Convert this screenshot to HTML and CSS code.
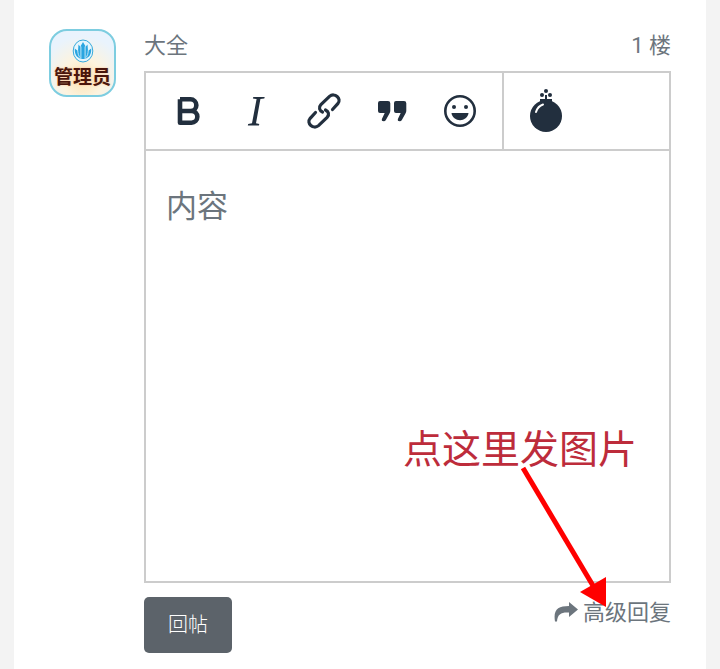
FILE: index.html
```
<!DOCTYPE html>
<html lang="zh-CN">
	<head>
		<meta charset="UTF-8">
		<meta name="viewport" content="width=device-width, initial-scale=1.0">
		<title>回帖</title>
		<link rel="stylesheet" href="styles.css">
	</head>
	<body>
		<div class="card">
			<div class="avatar">
				<svg class="avatar-logo" viewBox="0 0 22 24">
					<ellipse cx="11" cy="12" rx="9.800" ry="11" fill="#e6f6fd" stroke="#35a9dc" stroke-width="1"/>
					<path d="M11 3l2.300 4v13H8.700V7z" fill="#2aa5e0"/>
					<path d="M6.500 5.500L9 8.500v11.200C4.500 18.500 2.500 15 2.800 9.500L6 12zM15.500 5.500L13 8.500v11.200c4.500-1.200 6.500-4.700 6.200-10.200L16 12z" fill="#2aa5e0"/>
					<path d="M8.900 7.500V20M13.100 7.500V20M5.800 11.500c0 3 .8 5.500 2.200 7M16.200 11.500c0 3-.8 5.500-2.200 7" fill="none" stroke="#e6f6fd" stroke-width=".8"/>
				</svg>
				<span class="avatar-name">管理员</span>
			</div>
			<form class="reply">
				<div class="reply-head">
					<span>大全</span>
					<span>1 楼</span>
				</div>
				<div class="editor">
					<div class="toolbar">
						<div class="tool-group">
							<button type="button" class="tool" aria-label="粗体">
								<svg viewBox="0 0 40 40"><path d="M12 8.300v23.400h11.500a5.500 5.500 0 0 0 0-11.700H12M12 8.300h10.500a5.800 5.800 0 0 1 0 11.700" fill="none" stroke="#222f3e" stroke-width="4.600" stroke-linejoin="round"/></svg>
							</button>
							<button type="button" class="tool" aria-label="斜体">
								<svg viewBox="0 0 40 40"><path d="M17.300 6h11.400l-.4 1.500-3.900.6L20 32.300l3.300.6-.4 1.500H11.800l.4-1.500 3.800-.6L20.600 8.100l-3.700-.6z" fill="#222f3e"/></svg>
							</button>
							<button type="button" class="tool" aria-label="链接">
								<svg viewBox="0 0 40 40"><g fill="none" stroke="#222f3e" stroke-width="3.200" stroke-linecap="round"><path d="M18.500 21c-3-1.500-4.200-4.500-1.600-7.300l8.600-8.300c5-4.300 12.600 2 8.300 7.300L28.500 18.500"/><path d="M21.500 19c3 1.500 4.200 4.500 1.600 7.300l-8.600 8.300C9.500 38.900 1.900 32.600 6.200 27.300L11.500 21.500"/></g></svg>
							</button>
							<button type="button" class="tool" aria-label="引用">
								<svg viewBox="0 0 40 40"><path d="M8 10h8q2.300 0 2.300 2.300v7.400q0 1.300-.7 2.600L14 28.800q-.8 1.500-2.300 1.500-2.600 0-1.700-2.500l2.700-5.800H8q-2 0-2-2v-8q0-2 2-2zM24 10h8q2.300 0 2.300 2.300v7.400q0 1.300-.7 2.600L30 28.800q-.8 1.500-2.300 1.500-2.600 0-1.700-2.500l2.700-5.800H24q-2 0-2-2v-8q0-2 2-2z" fill="#222f3e"/></svg>
							</button>
							<button type="button" class="tool" aria-label="表情">
								<svg viewBox="0 0 40 40"><circle cx="20" cy="20" r="14.700" fill="none" stroke="#222f3e" stroke-width="2.600"/><circle cx="14" cy="16" r="2" fill="#222f3e"/><circle cx="26" cy="16" r="2" fill="#222f3e"/><path d="M11.500 22h17c-1 9.500-16 9.500-17 0z" fill="#222f3e"/></svg>
							</button>
						</div>
						<div class="tool-group">
							<button type="button" class="tool" aria-label="炸弹">
								<svg class="bomb" viewBox="0 0 40 48"><g fill="#222f3e"><circle cx="20" cy="29" r="16"/><path d="M14 12h12v6H14zM19 8h2v5h-2z"/><circle cx="20" cy="4" r="2"/><circle cx="16" cy="8" r="2"/><circle cx="24" cy="8" r="2"/></g><path d="M10 25q2-6 7-7.500" fill="none" stroke="#fff" stroke-width="2" stroke-linecap="round"/></svg>
							</button>
						</div>
					</div>
					<textarea class="content" placeholder="内容" aria-label="内容"></textarea>
					<div class="tip">点这里发图片
						<svg class="tip-arrow" viewBox="0 0 88 144"><path d="M3 3l72 121" stroke="#f00" stroke-width="5"/><path d="M86 142L60 127l26-15z" fill="#f00"/></svg>
					</div>
				</div>
				<div class="reply-foot">
					<button type="submit" class="submit">回帖</button>
					<a href="#" class="advanced">
						<svg viewBox="0 0 24 22"><path d="M1 19.500C-1 7.500 4 4 15 4V0l9 7.500-9 7.500v-4.500C8 10 3.500 11.500 3 19.500z" fill="#6c757d"/></svg>
						高级回复
					</a>
				</div>
			</form>
		</div>
	</body>
</html>
```
FILE: styles.css
```
*{
	box-sizing: border-box;
}
body{
	margin: 0;
	background: #f3f3f3;
	color: #6c757d;
	font: 22px/34px Roboto, "Noto Sans CJK SC", sans-serif;
}
.card{
	display: flex;
	align-items: flex-start;
	gap: 28px;
	min-height: 100vh;
	margin: 0 14px;
	padding: 29px 35px 16px;
	background: #fff;
}
.avatar{
	display: flex;
	flex-direction: column;
	align-items: center;
	flex: none;
	width: 67px;
	height: 68px;
	padding-top: 8px;
	border: 2px solid #7dcde0;
	border-radius: 18px;
	background: radial-gradient(circle at 50% 75%, #fbe3b5, #fdf3de 35%, #e9f3fd 75%);
}
.avatar-logo{
	width: 22px;
	height: 24px;
	flex: none;
}
.avatar-name{
	color: #4a160c;
	font: bold 19px/26px "Noto Sans CJK SC", sans-serif;
	text-shadow: 0 0 2px #f7b98c;
}
.reply{
	flex: 1;
	min-width: 0;
}
.reply-head{
	display: flex;
	justify-content: space-between;
	margin-bottom: 8px;
}
.editor{
	position: relative;
	border: 2px solid #ccc;
}
.toolbar{
	display: flex;
	border-bottom: 2px solid #ccc;
}
.tool-group{
	display: flex;
	padding: 0 8px;
}
.tool-group + .tool-group{
	border-left: 2px solid #ccc;
}
.tool{
	display: flex;
	align-items: center;
	justify-content: center;
	width: 68px;
	height: 76px;
	padding: 0;
	border: 0;
	background: none;
}
.tool svg{
	width: 40px;
	height: 40px;
}
.tool .bomb{
	height: 48px;
}
.content{
	display: block;
	width: 100%;
	height: 430px;
	padding: 32px 20px;
	border: 0;
	outline: 0;
	resize: none;
	background: none;
	color: #6c757d;
	font: 31px/48px Roboto, "Noto Sans CJK SC", sans-serif;
}
.content::placeholder{
	color: #6c757d;
	opacity: 1;
}
/* 提示文字和箭头，浮在输入框上面 */
.tip{
	position: absolute;
	right: 32px;
	bottom: 103px;
	color: #bd2c3b;
	font-size: 39px;
	line-height: 56px;
	white-space: nowrap;
	pointer-events: none;
}
.tip-arrow{
	position: absolute;
	top: 43px;
	left: 117px;
	width: 88px;
	height: 144px;
}
.reply-foot{
	display: flex;
	justify-content: space-between;
	align-items: flex-start;
	margin-top: 14px;
}
.submit{
	height: 56px;
	padding: 0 24px;
	border: 0;
	border-radius: 5px;
	background: #5c636a;
	color: #fff;
	font: 300 20px/52px Roboto, "Noto Sans CJK SC", sans-serif;
}
.advanced{
	display: flex;
	align-items: center;
	gap: 5px;
	color: #6c757d;
	line-height: 32px;
	text-decoration: none;
}
.advanced svg{
	width: 24px;
	height: 22px;
}
```
